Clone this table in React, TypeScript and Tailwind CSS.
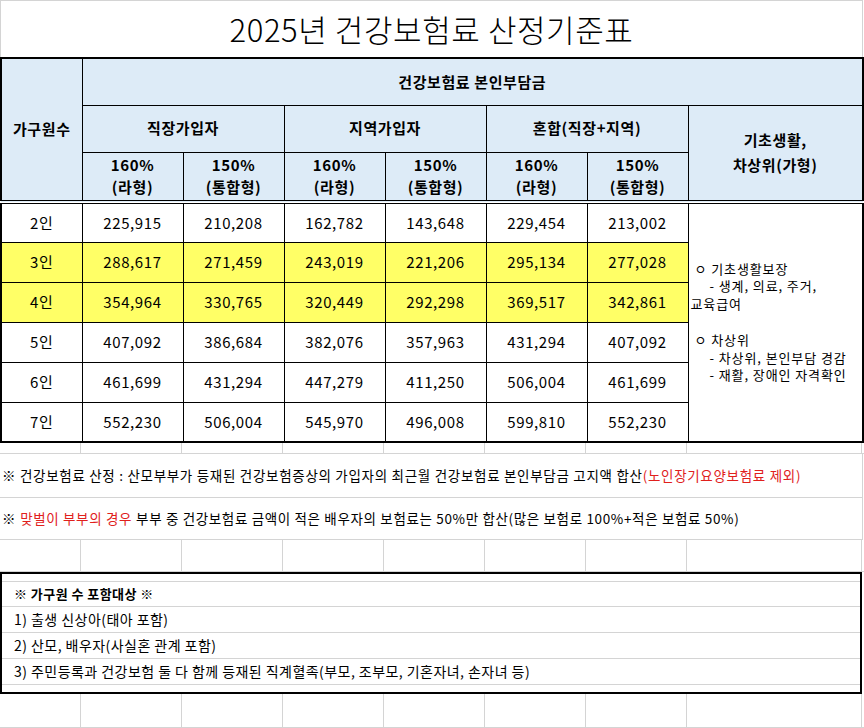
import React from "react";

const rows = [
  { label: "2인", v: ["225,915", "210,208", "162,782", "143,648", "229,454", "213,002"], hl: false },
  { label: "3인", v: ["288,617", "271,459", "243,019", "221,206", "295,134", "277,028"], hl: true },
  { label: "4인", v: ["354,964", "330,765", "320,449", "292,298", "369,517", "342,861"], hl: true },
  { label: "5인", v: ["407,092", "386,684", "382,076", "357,963", "431,294", "407,092"], hl: false },
  { label: "6인", v: ["461,699", "431,294", "447,279", "411,250", "506,004", "461,699"], hl: false },
  { label: "7인", v: ["552,230", "506,004", "545,970", "496,008", "599,810", "552,230"], hl: false },
];

const colWidths = ["w-[81px]", "w-[101px]", "w-[101px]", "w-[101px]", "w-[101px]", "w-[101px]", "w-[101px]", "w-[175px]"];

// 빈 셀 격자 (엑셀 눈금선)
function GridRow({ h }: { h: string }) {
  return (
    <div className={`flex ${h} border-b border-[#d4d4d4]`}>
      {colWidths.map((w, i) => (
        <div key={i} className={`${w} shrink-0 border-r border-[#d4d4d4]`} />
      ))}
    </div>
  );
}

export default function App() {
  const head = "border border-black bg-[#ddebf7] font-bold text-center";
  return (
    <div
      className="w-[864px] h-[728px] overflow-hidden bg-white text-black"
      style={{ fontFamily: '"Noto Sans CJK KR", "Noto Sans", sans-serif' }}
    >
      <div className="w-[863px] h-[57px] border-l border-t border-r border-[#d4d4d4] flex items-center justify-center pb-[2px] text-[31px] font-light tracking-[0.6px] leading-none">
        2025년 건강보험료 산정기준표
      </div>

      <table className="w-[862px] table-fixed border-collapse border-2 border-black text-[15px] tracking-[0.6px]">
        <colgroup>
          <col className="w-[81px]" />
          <col className="w-[101px]" />
          <col className="w-[101px]" />
          <col className="w-[101px]" />
          <col className="w-[101px]" />
          <col className="w-[101px]" />
          <col className="w-[101px]" />
          <col className="w-[175px]" />
        </colgroup>
        <thead>
          <tr className="h-[47px]">
            <th rowSpan={3} className={head}>가구원수</th>
            <th colSpan={7} className={head}>건강보험료 본인부담금</th>
          </tr>
          <tr className="h-[47px]">
            <th colSpan={2} className={head}>직장가입자</th>
            <th colSpan={2} className={head}>지역가입자</th>
            <th colSpan={2} className={head}>혼합(직장+지역)</th>
            <th rowSpan={2} className={`${head} leading-[25px] pb-[2px]`}>
              기초생활,
              <br />
              차상위(가형)
            </th>
          </tr>
          <tr className="h-[50px] border-b-4 border-double border-black">
            {["(라형)", "(통합형)", "(라형)", "(통합형)", "(라형)", "(통합형)"].map((t, i) => (
              <th key={i} className={`${head} leading-[22px]`}>
                {i % 2 === 0 ? "160%" : "150%"}
                <br />
                {t}
              </th>
            ))}
          </tr>
        </thead>
        <tbody>
          {rows.map((r, ri) => (
            <tr key={r.label} className={`h-[40px] ${r.hl ? "bg-[#ffff66]" : "bg-white"}`}>
              <td className="border border-black text-center">{r.label}</td>
              {r.v.map((n, i) => (
                <td key={i} className="border border-black text-center">
                  {n}
                </td>
              ))}
              {ri === 0 && (
                <td rowSpan={6} className="border border-black bg-white align-middle text-[13px] tracking-[0.9px] leading-[17.5px] pl-[2px] pb-[2px]">
                  <div className="pl-[4px]">ㅇ 기초생활보장</div>
                  <div className="pl-[19px]">- 생계, 의료, 주거,</div>
                  <div>교육급여</div>
                  <div className="h-[19px]" />
                  <div className="pl-[4px]">ㅇ 차상위</div>
                  <div className="pl-[19px]">- 차상위, 본인부담 경감</div>
                  <div className="pl-[19px]">- 재활, 장애인 자격확인</div>
                </td>
              )}
            </tr>
          ))}
        </tbody>
      </table>

      <GridRow h="h-[11px]" />
      <div className="w-[863px] h-[44px] border-b border-r border-[#d4d4d4] flex items-center pl-[2px] text-[13.5px] tracking-[0.7px] whitespace-nowrap">
        ※ 건강보험료 산정 : 산모부부가 등재된 건강보험증상의 가입자의 최근월 건강보험료 본인부담금 고지액 합산
        <span className="text-[#e0201c]">(노인장기요양보험료 제외)</span>
      </div>
      <div className="w-[863px] h-[42px] border-b border-r border-[#d4d4d4] flex items-center pl-[2px] text-[13.5px] tracking-[0.65px] whitespace-nowrap">
        ※ <span className="text-[#e0201c] mx-[4px]">맞벌이 부부의 경우</span>부부 중 건강보험료 금액이 적은 배우자의 보험료는 50%만 합산(많은 보험로 100%+적은 보험료 50%)
      </div>
      <GridRow h="h-[32px]" />

      <div className="w-[862px] border-2 border-black text-[14px] tracking-[0.45px] whitespace-nowrap">
        <div className="h-[8px] border-b border-[#d4d4d4]" />
        <div className="h-[25px] border-b border-[#d4d4d4] flex items-center pl-[12px] font-bold text-[13px]">※ 가구원 수 포함대상 ※</div>
        <div className="h-[26px] border-b border-[#d4d4d4] flex items-center pl-[12px]">1) 출생 신상아(태아 포함)</div>
        <div className="h-[26px] border-b border-[#d4d4d4] flex items-center pl-[12px]">2) 산모, 배우자(사실혼 관계 포함)</div>
        <div className="h-[26px] border-b border-[#d4d4d4] flex items-center pl-[12px]">
          3) 주민등록과 건강보험 둘 다 함께 등재된 직계혈족(부모, 조부모, 기혼자녀, 손자녀 등)
        </div>
        <div className="h-[7px]" />
      </div>
      <GridRow h="h-[34px]" />
    </div>
  );
}
